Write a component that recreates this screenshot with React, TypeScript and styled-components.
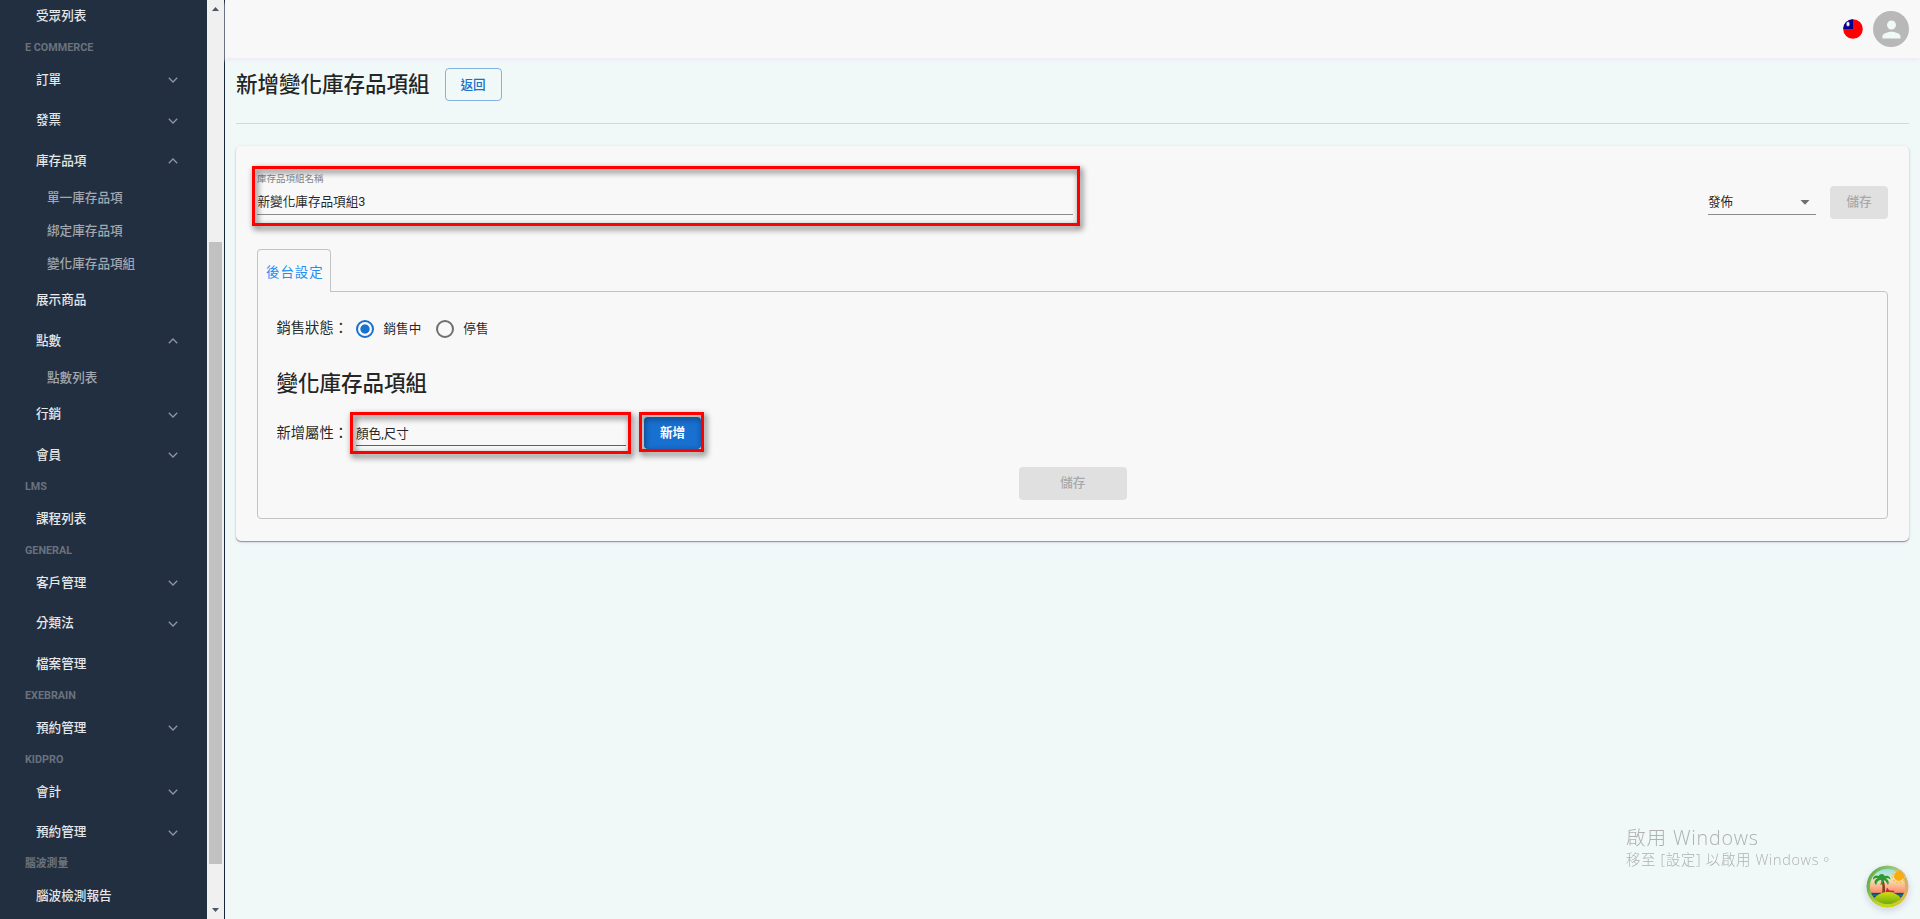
import React, { useState } from "react";
import styled, { createGlobalStyle } from "styled-components";

type MenuItem = {
  kind: "item" | "sub" | "section";
  name: string;
  arrow?: "up" | "down";
};

const menus: MenuItem[] = [
  { kind: "item", name: "受眾列表" },
  { kind: "section", name: "E COMMERCE" },
  { kind: "item", name: "訂單", arrow: "down" },
  { kind: "item", name: "發票", arrow: "down" },
  { kind: "item", name: "庫存品項", arrow: "up" },
  { kind: "sub", name: "單一庫存品項" },
  { kind: "sub", name: "綁定庫存品項" },
  { kind: "sub", name: "變化庫存品項組" },
  { kind: "item", name: "展示商品" },
  { kind: "item", name: "點數", arrow: "up" },
  { kind: "sub", name: "點數列表" },
  { kind: "item", name: "行銷", arrow: "down" },
  { kind: "item", name: "會員", arrow: "down" },
  { kind: "section", name: "LMS" },
  { kind: "item", name: "課程列表" },
  { kind: "section", name: "GENERAL" },
  { kind: "item", name: "客戶管理", arrow: "down" },
  { kind: "item", name: "分類法", arrow: "down" },
  { kind: "item", name: "檔案管理" },
  { kind: "section", name: "EXEBRAIN" },
  { kind: "item", name: "預約管理", arrow: "down" },
  { kind: "section", name: "KIDPRO" },
  { kind: "item", name: "會計", arrow: "down" },
  { kind: "item", name: "預約管理", arrow: "down" },
  { kind: "section", name: "腦波測量" },
  { kind: "item", name: "腦波檢測報告" },
];

const statuses = ["銷售中", "停售"];

const App = () => {
  const [status, setStatus] = useState("銷售中");

  return (
    <Container>
      <GlobalStyle />
      <Sidebar>
        {menus.map((menu, index) => {
          if (menu.kind === "section") return <Section key={index}>{menu.name}</Section>;
          if (menu.kind === "sub") return <SubItem key={index}>{menu.name}</SubItem>;
          return (
            <Item key={index}>
              {menu.name}
              {menu.arrow && (
                <Chevron viewBox="0 0 10 6" $up={menu.arrow === "up"}>
                  <path d="M0.8 0.8L5 5L9.2 0.8" />
                </Chevron>
              )}
            </Item>
          );
        })}
      </Sidebar>
      <Scrollbar>
        <ScrollArrow viewBox="0 0 7 4">
          <path d="M0 4L3.5 0L7 4Z" />
        </ScrollArrow>
        <Track>
          <Thumb />
        </Track>
        <ScrollArrow viewBox="0 0 7 4">
          <path d="M0 0L3.5 4L7 0Z" />
        </ScrollArrow>
      </Scrollbar>
      <Main>
        <Header>
          <Flag viewBox="0 0 20 20">
            <circle cx="10" cy="10" r="9.8" fill="#fe0000" />
            <path d="M10 0.2A9.8 9.8 0 0 0 0.2 10H10Z" fill="#000095" />
            <ellipse cx="5" cy="5" rx="1.7" ry="2.6" fill="#b9bfe8" />
            <ellipse cx="5" cy="5" rx="1" ry="1.6" fill="#fff" />
          </Flag>
          <Avatar>
            <svg width="27" height="27" viewBox="0 0 24 24" fill="#f0f8f8">
              <path d="M12 12c2.21 0 4-1.79 4-4s-1.79-4-4-4-4 1.79-4 4 1.79 4 4 4m0 2c-2.67 0-8 1.34-8 4v2h16v-2c0-2.66-5.33-4-8-4" />
            </svg>
          </Avatar>
        </Header>
        <Content>
          <TitleRow>
            <Title>新增變化庫存品項組</Title>
            <BackButton>返回</BackButton>
          </TitleRow>
          <Card>
            <NameRow>
              <NameField>
                <Label>庫存品項組名稱</Label>
                <FieldText>新變化庫存品項組3</FieldText>
                <NameMark />
              </NameField>
              <Publish>
                <Select>
                  發佈
                  <svg width="10" height="5" viewBox="0 0 10 5" fill="#6d706d">
                    <path d="M0.5 0L5 4.8L9.5 0Z" />
                  </svg>
                </Select>
                <SaveButton $width={58}>儲存</SaveButton>
              </Publish>
            </NameRow>
            <Tab>後台設定</Tab>
            <Panel>
              <StatusRow>
                <Caption>銷售狀態：</Caption>
                {statuses.map((name) => (
                  <RadioLabel key={name} onClick={() => setStatus(name)}>
                    <Radio $checked={status === name} />
                    <RadioText>{name}</RadioText>
                  </RadioLabel>
                ))}
              </StatusRow>
              <SubTitle>變化庫存品項組</SubTitle>
              <AttrRow>
                <Caption>新增屬性：</Caption>
                <AttrField>
                  顏色,尺寸
                  <AttrMark />
                </AttrField>
                <AddButton>
                  新增
                  <AddMark />
                </AddButton>
              </AttrRow>
              <PanelBottom>
                <SaveButton $width={108}>儲存</SaveButton>
              </PanelBottom>
            </Panel>
          </Card>
        </Content>
      </Main>
      <Watermark>
        <p>啟用 Windows</p>
        <span>移至 [設定] 以啟用 Windows。</span>
      </Watermark>
      <Island viewBox="0 0 44 44">
        <defs>
          <linearGradient id="sky" x1="0" y1="0" x2="0" y2="1">
            <stop offset="0.1" stopColor="#8fe0ee" />
            <stop offset="0.32" stopColor="#e9e9c4" />
            <stop offset="0.5" stopColor="#fdb68b" />
            <stop offset="0.66" stopColor="#fb8468" />
          </linearGradient>
          <linearGradient id="ring" x1="0" y1="0.2" x2="1" y2="0.6">
            <stop offset="0" stopColor="#5cab45" />
            <stop offset="0.5" stopColor="#9ac77a" />
            <stop offset="1" stopColor="#e9a868" />
          </linearGradient>
          <linearGradient id="ringBottom" x1="0" y1="0" x2="0" y2="1">
            <stop offset="0.6" stopColor="#c5d420" stopOpacity="0" />
            <stop offset="1" stopColor="#c5d90c" />
          </linearGradient>
          <linearGradient id="hill" x1="0" y1="0" x2="0" y2="1">
            <stop offset="0" stopColor="#d3dc10" />
            <stop offset="1" stopColor="#5da50d" />
          </linearGradient>
          <clipPath id="inside">
            <circle cx="22" cy="22" r="18" />
          </clipPath>
        </defs>
        <circle cx="22" cy="22" r="21.6" fill="url(#ring)" />
        <circle cx="22" cy="22" r="21.6" fill="url(#ringBottom)" />
        <g clipPath="url(#inside)">
          <rect width="44" height="44" fill="url(#sky)" />
          <rect y="28.5" width="44" height="7" fill="#0d5370" />
          <path d="M4 31h36M4 33.5h36" stroke="#2181a0" strokeWidth="0.8" />
          <path d="M16.3 29c.8-5 .8-9-.8-14h2.2c2 5 2 9 1.6 14z" fill="#8a3e22" />
          <path d="M20 28l1.5-5 2.4 3 5 .4v1.6l-4.6-.2z" fill="#d6213e" />
          <path d="M4 42C8 31 15 27.5 22.5 27.5S37 32 40 42z" fill="url(#hill)" />
        </g>
        <circle cx="33.5" cy="11.5" r="6.6" fill="none" stroke="#fbc14e" strokeWidth="1.6" strokeDasharray="2 1.6" />
        <circle cx="33.5" cy="11.5" r="4.8" fill="#fbab0c" />
        <path
          d="M16.3 15.5C13 14.5 11 17 10.5 20.5 7.5 18.5 8.5 14.5 12 13.5 9.5 12.8 8 14 7 15.5 6.6 11.5 10 9.7 13 11.2 14.5 8.3 18.5 8.8 19.3 11.4 22 10 25.5 12 25 15 23.2 13.4 21.5 13.4 20.5 14 23.5 15.3 24 18.5 22.4 20.5 21.2 17 19.2 15.4 18 15.6 17.8 18.5 16.5 20 14.5 20.5z"
          fill="#2e9a35"
        />
      </Island>
    </Container>
  );
};

const GlobalStyle = createGlobalStyle`
  * {
    box-sizing: border-box;
  }
  body {
    margin: 0;
    overflow: hidden;
    background: #f0f8f8;
    font-family: Roboto, "Noto Sans CJK TC", sans-serif;
    font-size: 12.6px;
    color: rgba(0, 0, 0, 0.87);
  }
  h1, h2, p {
    margin: 0;
  }
  button {
    font-family: inherit;
  }
`;

const Container = styled.div`
  display: flex;
  width: 100vw;
  height: 919px;
`;

const Sidebar = styled.nav`
  width: 207px;
  height: 100%;
  overflow: hidden;
  background: #222f40;
  > :first-child {
    margin-top: -5px;
  }
`;

const Item = styled.div`
  display: flex;
  align-items: center;
  justify-content: space-between;
  height: 40.5px;
  padding: 0 29px 2px 36px;
  font-weight: 500;
  color: #e6e7e9;
`;

const SubItem = styled.div`
  height: 33px;
  padding-left: 47px;
  line-height: 33.5px;
  font-weight: 500;
  color: #a2a8b0;
`;

const Section = styled.div`
  height: 23.5px;
  padding-left: 25px;
  line-height: 24.5px;
  font-size: 10.8px;
  font-weight: 700;
  color: #6a727d;
`;

const Chevron = styled.svg<{ $up: boolean }>`
  width: 10px;
  height: 6px;
  margin-top: 4px;
  fill: none;
  stroke: #8f96a1;
  stroke-width: 1.3;
  ${({ $up }) => $up && `transform: rotate(180deg);`}
`;

const Scrollbar = styled.div`
  display: flex;
  flex-direction: column;
  align-items: center;
  justify-content: space-between;
  width: 18px;
  padding: 7px 0;
  background: #f0f0f0;
  border-right: 1px solid #16263a;
`;

const ScrollArrow = styled.svg`
  width: 7px;
  height: 4px;
  fill: #4c5563;
`;

const Track = styled.div`
  width: 13px;
  height: 885px;
  padding-top: 225px;
`;

const Thumb = styled.div`
  height: 622px;
  background: #c1c1c1;
`;

const Main = styled.main`
  flex: 1;
`;

const Header = styled.header`
  display: flex;
  align-items: center;
  justify-content: flex-end;
  gap: 10.5px;
  height: 58px;
  padding-right: 11px;
  background: #f8f8f8;
  box-shadow: 0 3px 3px #eeeff6;
`;

const Flag = styled.svg`
  width: 20px;
  height: 20px;
`;

const Avatar = styled.div`
  display: flex;
  align-items: center;
  justify-content: center;
  width: 36px;
  height: 36px;
  border-radius: 50%;
  background: #b8b8b8;
`;

const Content = styled.div`
  padding: 10px 11px;
`;

const TitleRow = styled.div`
  display: flex;
  gap: 15px;
  height: 56px;
  margin-bottom: 22px;
  border-bottom: 1px solid #d3d9d9;
`;

const Title = styled.h1`
  font-size: 21.5px;
  font-weight: 500;
  line-height: 33px;
`;

const BackButton = styled.button`
  width: 57px;
  height: 33px;
  padding: 0 0 2px;
  background: transparent;
  border: 1px solid #84b2e2;
  border-radius: 4px;
  font-size: 12.6px;
  font-weight: 500;
  color: #1870c8;
`;

const Card = styled.section`
  height: 395px;
  padding: 20px 22px 0 21px;
  background: #f8f8f8;
  border-radius: 5px;
  box-shadow: 0 1px 1px rgba(0, 0, 0, 0.35), 0 1px 3px rgba(120, 100, 160, 0.25);
`;

const NameRow = styled.div`
  display: flex;
  justify-content: space-between;
  height: 83px;
`;

const NameField = styled.div`
  position: relative;
  width: 816px;
  height: 49px;
  border-bottom: 1px solid #8b8b8b;
`;

const Label = styled.div`
  height: 25px;
  line-height: 25px;
  font-size: 9.5px;
  color: #858585;
`;

const FieldText = styled.div`
  padding-left: 0.5px;
  line-height: 22px;
`;

/* red annotation frame laid over the form */
const Mark = styled.div`
  position: absolute;
  border: 3px solid #fe0000;
  filter: drop-shadow(2px 3px 3px rgba(0, 0, 0, 0.7));
  pointer-events: none;
`;

const NameMark = styled(Mark)`
  inset: 0 -7px -12px -5px;
`;

const AttrMark = styled(Mark)`
  inset: -10px -5px -9px -6px;
`;

const AddMark = styled(Mark)`
  inset: -5px -3px -3px -5px;
`;

const Publish = styled.div`
  display: flex;
  align-items: flex-start;
  gap: 14px;
  margin-right: -1px;
  padding-top: 20px;
`;

const Select = styled.div`
  display: flex;
  align-items: center;
  justify-content: space-between;
  width: 108px;
  height: 29px;
  padding-right: 6px;
  border-bottom: 1px solid #8b8b8b;
  > svg {
    margin-top: 4px;
  }
`;

const SaveButton = styled.button<{ $width: number }>`
  width: ${({ $width }) => $width}px;
  height: 33px;
  padding: 0 0 4px;
  background: #e0e0e0;
  border: none;
  border-radius: 4px;
  font-size: 12.6px;
  font-weight: 500;
  color: #a9a9a9;
`;

const Tab = styled.div`
  position: relative;
  width: 74px;
  height: 43px;
  padding-left: 8px;
  line-height: 46px;
  font-size: 13.4px;
  letter-spacing: 1px;
  color: #1f8ff5;
  background: #f8f8f8;
  border: 1px solid #c4c4c4;
  border-bottom: none;
  border-radius: 4px 4px 0 0;
`;

const Panel = styled.div`
  height: 228px;
  margin-top: -1px;
  margin-right: -1px;
  padding: 19px 18px 0 18.5px;
  border: 1px solid #c4c4c4;
  border-radius: 0 4px 4px 4px;
`;

const StatusRow = styled.div`
  display: flex;
  align-items: center;
  height: 36px;
  > :first-child {
    padding-bottom: 6px;
  }
`;

const Caption = styled.span`
  width: 79.5px;
  font-size: 14.3px;
`;

const RadioLabel = styled.label`
  display: flex;
  align-items: center;
  gap: 9.5px;
  margin-right: 14.5px;
`;

const RadioText = styled.span`
  padding-bottom: 3px;
`;

const Radio = styled.span<{ $checked: boolean }>`
  width: 18px;
  height: 18px;
  border: 2px solid ${({ $checked }) => ($checked ? "#1870d0" : "#6f6f6f")};
  border-radius: 50%;
  ${({ $checked }) => $checked && `background: radial-gradient(circle, #1870d0 4.2px, transparent 5px);`}
`;

const SubTitle = styled.h2`
  margin-top: 21px;
  line-height: 32px;
  font-size: 21.5px;
  font-weight: 500;
`;

const AttrRow = styled.div`
  display: flex;
  align-items: flex-start;
  margin-top: 17px;
  height: 50px;
  ${Caption} {
    line-height: 33px;
  }
`;

const AttrField = styled.div`
  position: relative;
  width: 270px;
  height: 24px;
  margin: 5px 18px 0 0;
  line-height: 23px;
  border-bottom: 1px solid #1870c8;
`;

const AddButton = styled.button`
  position: relative;
  width: 57px;
  height: 32px;
  padding: 0 0 4px;
  background: #1870d0;
  border: none;
  border-radius: 4px;
  font-size: 12.6px;
  font-weight: 700;
  color: #ffffff;
`;

const PanelBottom = styled.div`
  display: flex;
  justify-content: center;
`;

const Watermark = styled.div`
  position: fixed;
  left: 1626px;
  top: 824px;
  font-family: "Open Sans", "Noto Sans CJK TC", sans-serif;
  font-weight: 300;
  color: #b0b0b2;
  white-space: nowrap;
  p {
    line-height: 27px;
    font-size: 19.7px;
    letter-spacing: 0.8px;
  }
  span {
    display: block;
    line-height: 18px;
    font-size: 14.4px;
    letter-spacing: 0.7px;
  }
`;

const Island = styled.svg`
  position: fixed;
  left: 1866px;
  top: 865px;
  width: 43px;
  height: 43px;
  border-radius: 50%;
  box-shadow: 0 3px 6px rgba(90, 70, 140, 0.2);
`;

export default App;
